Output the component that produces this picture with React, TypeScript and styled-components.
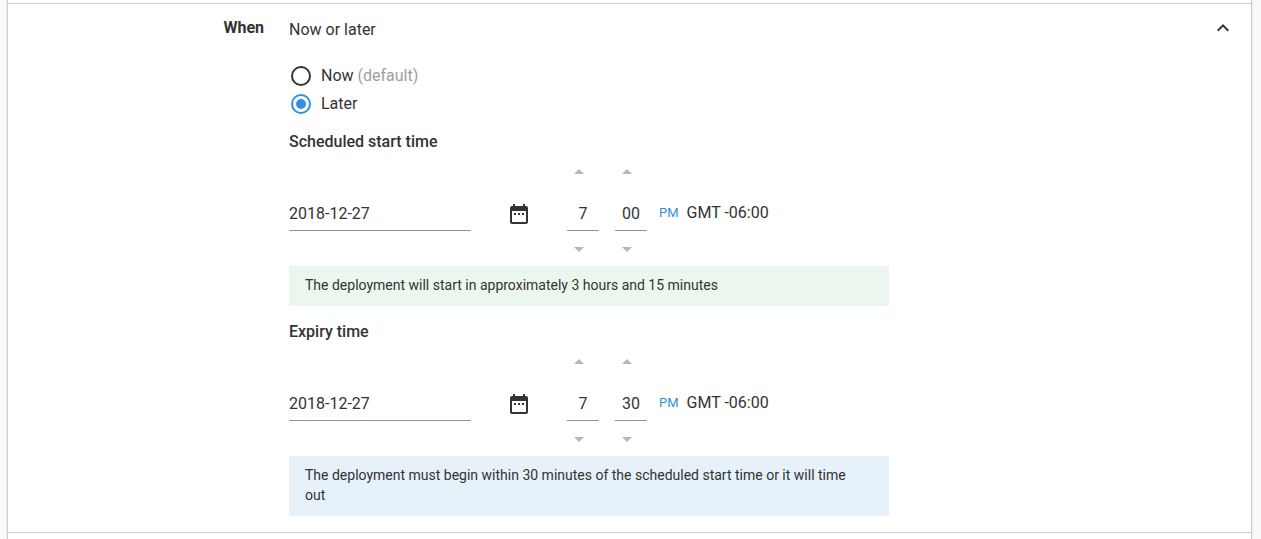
import React, { useState } from "react";
import styled, { createGlobalStyle } from "styled-components";

const GlobalStyle = createGlobalStyle`
  *, *::before, *::after { box-sizing: border-box; }
  body {
    margin: 0;
    background: #fafafa;
    color: #333;
    font: 400 16px/24px Roboto, sans-serif;
  }
  button, input { font: inherit; color: inherit; }
`;

const Surface = styled.main`
  min-height: 100vh;
  margin: 0 9px 0 7px;
  padding-top: 3px;
  background: #fff;
  border: 0 solid #ccc;
  border-width: 0 1px;
  box-shadow: 0 0 2px rgba(0, 0, 0, 0.15);
`;

const Section = styled.section`
  display: grid;
  grid-template-columns: 256px minmax(0, 1fr) 24px;
  column-gap: 25px;
  align-items: start;
  padding: 12px 16px 16px 0;
  border: 0 solid #ccc;
  border-width: 1px 0;
`;

const SectionLabel = styled.h2`
  margin: 0;
  font-size: 16px;
  font-weight: 700;
  text-align: right;
`;

const Content = styled.div`
  max-width: 600px;
`;

const Summary = styled.p`
  margin: 2px 0 20px;
`;

const Choices = styled.fieldset`
  margin: 0 0 12px;
  padding: 0;
  border: 0;
`;

const Choice = styled.label`
  display: flex;
  align-items: center;
  height: 28px;
  padding-left: 2px;
  gap: 10px;
`;

const Radio = styled.input.attrs({ type: "radio" })`
  appearance: none;
  display: grid;
  place-content: center;
  width: 20px;
  height: 20px;
  margin: 0;
  border: 2px solid #333;
  border-radius: 50%;

  &:checked {
    border-color: #3090e0;
  }
  &:checked::before {
    content: "";
    width: 10px;
    height: 10px;
    border-radius: 50%;
    background: #3090e0;
  }
`;

const Muted = styled.span`
  color: #9e9e9e;
`;

const FieldHeading = styled.h3`
  margin: 0 0 1px;
  font-size: 16px;
  font-weight: 500;
  line-height: 24px;
`;

const ScheduleRow = styled.div`
  display: flex;
  align-items: center;
`;

const TextField = styled.input.attrs({ type: "text" })<{ $short?: boolean }>`
  width: ${(p) => (p.$short ? 32 : 182)}px;
  height: 41px;
  padding: 6px 0 0;
  border: 0;
  border-bottom: 1px solid #949494;
  border-radius: 0;
  background: transparent;
  text-align: ${(p) => (p.$short ? "center" : "left")};
  outline: none;
`;

const IconButton = styled.button`
  display: block;
  width: 24px;
  height: 24px;
  padding: 0;
  border: 0;
  background: none;
  cursor: pointer;

  svg {
    display: block;
    fill: #333;
  }
`;

const CalendarSlot = styled.div`
  padding: 6px 36px 0;
`;

const Steppers = styled.div`
  display: flex;
  gap: 16px;
`;

const Stepper = styled.div`
  display: flex;
  flex-direction: column;
  gap: 2px;
`;

const StepButton = styled.button<{ $down?: boolean }>`
  display: grid;
  place-content: center;
  width: 24px;
  height: 33px;
  padding: 0;
  border: 0;
  background: none;
  cursor: pointer;

  svg {
    display: block;
    fill: #b8b8b8;
    transform: ${(p) => (p.$down ? "rotate(180deg)" : "none")};
  }
`;

const Zone = styled.div`
  display: flex;
  align-items: center;
  gap: 8px;
  padding: 4px 0 0 12px;
`;

const MeridiemButton = styled.button`
  padding: 0;
  border: 0;
  background: none;
  color: #3090e0;
  font-size: 13px;
  cursor: pointer;
`;

const Notice = styled.p<{ $tone: "success" | "info" }>`
  margin: 0;
  padding: 9px 20px 11px 16px;
  background: ${(p) => (p.$tone === "success" ? "#ebf7ee" : "#e6f1fa")};
  font-size: 14px;
  line-height: 20px;
`;

const Schedule = styled.div`
  & + & {
    margin-top: 14px;
  }
`;

const Triangle = () => (
  <svg width="10" height="5" viewBox="0 0 10 5" aria-hidden="true">
    <path d="M0 5 5 0l5 5z" />
  </svg>
);

const pad = (n: number) => String(n).padStart(2, "0");

interface UnitProps {
  label: string;
  value: string;
  onStep: (delta: number) => void;
}

const Unit = ({ label, value, onStep }: UnitProps) => (
  <Stepper>
    <StepButton type="button" aria-label={`Increase ${label}`} onClick={() => onStep(1)}>
      <Triangle />
    </StepButton>
    <TextField $short aria-label={label} value={value} readOnly />
    <StepButton $down type="button" aria-label={`Decrease ${label}`} onClick={() => onStep(-1)}>
      <Triangle />
    </StepButton>
  </Stepper>
);

interface TimeProps {
  title: string;
  startMinute: number;
  tone: "success" | "info";
  notice: string;
}

const TimeSchedule = ({ title, startMinute, tone, notice }: TimeProps) => {
  const [date, setDate] = useState("2018-12-27");
  const [hour, setHour] = useState(7);
  const [minute, setMinute] = useState(startMinute);
  const [pm, setPm] = useState(true);

  return (
    <Schedule>
      <FieldHeading>{title}</FieldHeading>
      <ScheduleRow>
        <TextField
          aria-label={`${title} date`}
          value={date}
          onChange={(e) => setDate(e.target.value)}
        />
        <CalendarSlot>
          <IconButton type="button" aria-label="Open calendar">
            <svg width="24" height="24" viewBox="0 0 24 24" aria-hidden="true">
              <path d="M9 11H7v2h2v-2zm4 0h-2v2h2v-2zm4 0h-2v2h2v-2zm2-7h-1V2h-2v2H8V2H6v2H5c-1.11 0-1.99.9-1.99 2L3 20c0 1.1.89 2 2 2h14c1.1 0 2-.9 2-2V6c0-1.1-.9-2-2-2zm0 16H5V9h14v11z" />
            </svg>
          </IconButton>
        </CalendarSlot>
        <Steppers>
          <Unit
            label={`${title} hour`}
            value={String(hour)}
            onStep={(d) => setHour((h) => ((h - 1 + d + 12) % 12) + 1)}
          />
          <Unit
            label={`${title} minute`}
            value={pad(minute)}
            onStep={(d) => setMinute((m) => (m + d + 60) % 60)}
          />
        </Steppers>
        <Zone>
          <MeridiemButton type="button" onClick={() => setPm(!pm)}>
            {pm ? "PM" : "AM"}
          </MeridiemButton>
          <span>GMT -06:00</span>
        </Zone>
      </ScheduleRow>
      <Notice $tone={tone}>{notice}</Notice>
    </Schedule>
  );
};

export default function App() {
  const [later, setLater] = useState(true);

  return (
    <>
      <GlobalStyle />
      <Surface>
        <Section>
          <SectionLabel>When</SectionLabel>
          <Content>
            <Summary>Now or later</Summary>
            <Choices aria-label="When">
              <Choice>
                <Radio name="when" checked={!later} onChange={() => setLater(false)} />
                <span>
                  Now <Muted>(default)</Muted>
                </span>
              </Choice>
              <Choice>
                <Radio name="when" checked={later} onChange={() => setLater(true)} />
                <span>Later</span>
              </Choice>
            </Choices>
            <TimeSchedule
              title="Scheduled start time"
              startMinute={0}
              tone="success"
              notice="The deployment will start in approximately 3 hours and 15 minutes"
            />
            <TimeSchedule
              title="Expiry time"
              startMinute={30}
              tone="info"
              notice="The deployment must begin within 30 minutes of the scheduled start time or it will time out"
            />
          </Content>
          <IconButton type="button" aria-label="Collapse section">
            <svg width="24" height="24" viewBox="0 0 24 24" aria-hidden="true">
              <path d="M12 8l-6 6 1.41 1.41L12 10.83l4.59 4.58L18 14z" />
            </svg>
          </IconButton>
        </Section>
      </Surface>
    </>
  );
}
